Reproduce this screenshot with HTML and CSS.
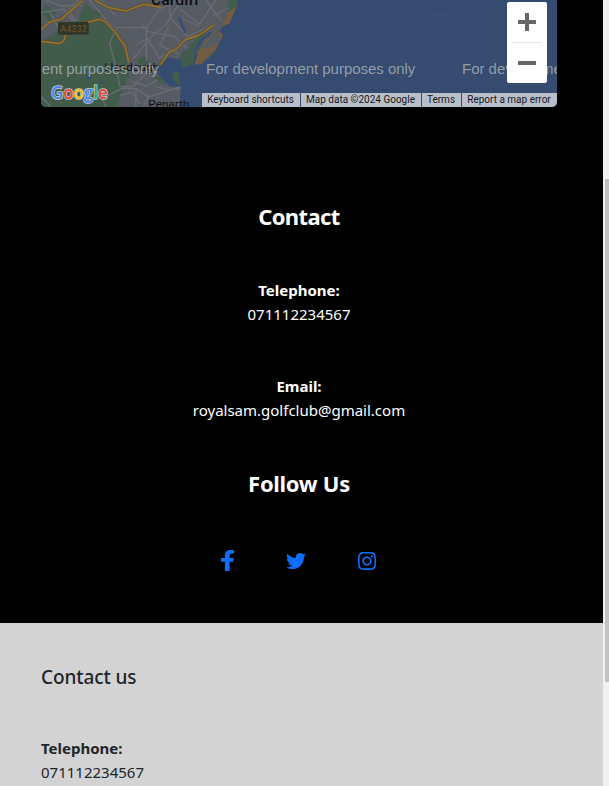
FILE: index.html
```html
<!DOCTYPE html>
<html lang="en">
<head>
<meta charset="utf-8">
<title>Royal Sam Golf Club</title>
<link rel="stylesheet" href="styles.css">
</head>
<body>
<div class="page">
<main class="content">
<section class="dark">
  <div class="map">
    <svg class="terrain" viewBox="15 0 1548 321" preserveAspectRatio="none" aria-hidden="true">
      <rect x="15" width="1548" height="321" fill="#364b70"/>
      <path fill="#575b63" d="M15 0H605L603 17 573 41 566 70 553 88 545 116 532 149 514 167 492 183 479 192 485 164 476 151 452 147 436 163 432 179 397 172 371 195 364 219 383 242 404 260 433 260 433 321H15Z"/>
      <path fill="#425c4c" d="M133 38 128 60 110 68 66 92 15 125V321H242L257 281 266 253 281 230 274 194 262 143 233 97 220 76 205 68 187 54 205 38 166 29 151 10ZM15 34 38 62 60 38 30 12Z"/>
      <path fill="#425c4c" d="M578 0H606L592 38 568 34ZM344 225 371 230 391 251 371 249ZM306 178 323 167 342 190 336 212 306 212ZM435 163 464 139 477 160 471 193 436 204Z"/>
      <path fill="#725d42" d="M490 143 539 91 562 103 540 150 497 192 476 194ZM558 80 574 39 604 16 581 70Z"/>
      <path fill="#575b63" d="M496 143 527 108 547 91 551 127 527 140 503 147Z"/>
      <path fill="#425c4c" d="M458 139 492 107 513 97 492 148 476 164ZM410 219 429 214 433 260 410 239Z"/>
      <g fill="none" stroke="#696c73" stroke-width="4">
        <path d="M16 37 83 28 109 60 128 59M29 0 76 18 137 15M160 0 230 82 333 83 368 30 430 0M240 87 221 130 240 205 252 260 290 259 329 223M290 179 354 101 392 71 436 0M299 135 334 115 370 174 397 160M315 70 335 94 413 109 452 145M331 80 331 184M399 76 372 137 428 160M397 0 404 54 455 110 535 73M438 54 490 80M431 27 490 72 540 0M510 0 556 62M530 46 580 24"/>
        <path d="M257 264 300 266 338 290 433 261M289 244 331 258 365 240M300 265 299 321M257 265 198 297 211 321M250 287 288 276 310 311M338 290 321 321M360 260 390 268 433 267M16 290 45 321M129 0 101 28 125 89M41 36 69 86M194 0 240 48"/>
      </g>
      <g stroke="#324c7b" stroke-width="7"><path d="M429 53 448 99M492 124 525 97M471 157 493 126"/><path d="M150 232H166M191 248H200"/></g>
      <g fill="none" stroke-linejoin="round">
        <path stroke="#5d4d2b" stroke-width="9" d="M15 90 38 68 76 57 139 2M176 0 219 23 270 33 324 13 376 22M15 124 43 127 70 131 84 121 91 100 147 69 189 58 208 65 234 93 267 137 278 187M372 195 401 155 421 147 448 119 488 106 532 76"/>
        <path stroke="#93732f" stroke-width="5" d="M15 90 38 68 76 57 139 2M176 0 219 23 270 33 324 13 376 22M15 124 43 127 70 131 84 121 91 100 147 69 189 58 208 65 234 93 267 137 278 187M372 195 401 155 421 147 448 119 488 106 532 76"/>
      </g>
      <path d="M1134 48 1222 46 1292 42 1404 37" stroke="#46566d" stroke-width="2" stroke-dasharray="16 7" fill="none"/>
      <rect x="66" y="66" width="92" height="38" rx="5" fill="#30352c"/>
      <g class="places">
        <text x="73" y="95" class="road-number" textLength="80">A4232</text>
        <text x="345" y="16" class="city" textLength="145" lengthAdjust="spacingAndGlyphs">Cardiff</text>
        <text x="205" y="213" textLength="164" lengthAdjust="spacingAndGlyphs">Llandough</text>
        <text x="337" y="325" textLength="123" lengthAdjust="spacingAndGlyphs">Penarth</text>
      </g>
      <g class="watermark">
        <text x="17" y="223" textLength="351">ent purposes only</text>
        <text x="510" y="223" textLength="628">For development purposes only</text>
        <text x="1278" y="223" textLength="628">For development purposes only</text>
      </g>
      <text class="google" x="45" y="297" textLength="170" lengthAdjust="spacingAndGlyphs"><tspan fill="#4285f4">G</tspan><tspan fill="#ea4335">o</tspan><tspan fill="#fbbc04">o</tspan><tspan fill="#4285f4">g</tspan><tspan fill="#34a853">l</tspan><tspan fill="#ea4335">e</tspan></text>
    </svg>
    <div class="zoom"><span class="plus"></span><span class="rule"></span><span class="minus"></span></div>
    <div class="credits"><span class="keys">Keyboard shortcuts</span><span class="data">Map data ©2024 Google</span><span class="terms">Terms</span><span class="report">Report a map error</span></div>
  </div>
  <h2>Contact</h2>
  <div class="detail"><strong>Telephone:</strong><span class="digits">071112234567</span></div>
  <div class="detail"><strong>Email:</strong><span>royalsam.golfclub@gmail.com</span></div>
  <h2 class="follow">Follow Us</h2>
  <nav class="social">
    <a aria-label="Facebook"><svg width="13" height="21" viewBox="22 0 275 512" preserveAspectRatio="none"><path d="M279.14 288l14.22-92.66h-88.91v-60.13c0-25.35 12.42-50.06 52.24-50.06h40.42V6.26S260.43 0 225.36 0c-73.22 0-121.08 44.38-121.08 124.72v70.62H22.89V288h81.39v224h100.17V288z"/></svg></a>
    <a aria-label="Twitter"><svg width="20" height="20" viewBox="0 0 512 512"><path d="M459.37 151.716c.325 4.548.325 9.097.325 13.645 0 138.72-105.583 298.558-298.558 298.558-59.452 0-114.68-17.219-161.137-47.106 8.447.974 16.568 1.299 25.34 1.299 49.055 0 94.213-16.568 130.274-44.832-46.132-.975-84.792-31.188-98.112-72.772 6.498.974 12.995 1.624 19.818 1.624 9.421 0 18.843-1.3 27.614-3.573-48.081-9.747-84.143-51.98-84.143-102.985v-1.299c13.969 7.797 30.214 12.67 47.431 13.319-28.264-18.843-46.781-51.005-46.781-87.391 0-19.492 5.197-37.36 14.294-52.954 51.655 63.675 129.3 105.258 216.365 109.807-1.624-7.797-2.599-15.918-2.599-24.04 0-57.828 46.782-104.934 104.934-104.934 30.213 0 57.502 12.67 76.67 33.137 23.715-4.548 46.456-13.32 66.599-25.34-7.798 24.366-24.366 44.833-46.132 57.827 21.117-2.273 41.584-8.122 60.426-16.243-14.292 20.791-32.161 39.308-52.628 54.253z"/></svg></a>
    <a aria-label="Instagram"><svg width="18" height="18" viewBox="0 31.5 448 449"><path d="M224.1 141c-63.6 0-114.9 51.3-114.9 114.9s51.3 114.9 114.9 114.9S339 319.5 339 255.9 287.7 141 224.1 141zm0 189.6c-41.1 0-74.7-33.5-74.7-74.7s33.5-74.7 74.7-74.7 74.7 33.5 74.7 74.7-33.6 74.7-74.7 74.7zm146.4-194.3c0 14.9-12 26.8-26.8 26.8-14.9 0-26.8-12-26.8-26.8s12-26.8 26.8-26.8 26.8 12 26.8 26.8zm76.1 27.2c-1.7-35.9-9.9-67.7-36.2-93.9-26.2-26.2-58-34.4-93.9-36.2-37-2.1-147.9-2.1-184.9 0-35.8 1.7-67.6 9.9-93.9 36.1s-34.4 58-36.2 93.9c-2.1 37-2.1 147.9 0 184.9 1.7 35.9 9.9 67.7 36.2 93.9s58 34.4 93.9 36.2c37 2.1 147.9 2.1 184.9 0 35.9-1.7 67.7-9.9 93.9-36.2 26.2-26.2 34.4-58 36.2-93.9 2.1-37 2.1-147.8 0-184.8zM398.8 388c-7.8 19.6-22.9 34.7-42.6 42.6-29.5 11.7-99.5 9-132.1 9s-102.7 2.6-132.1-9c-19.6-7.8-34.7-22.9-42.6-42.6-11.7-29.5-9-99.5-9-132.1s-2.6-102.7 9-132.1c7.8-19.6 22.9-34.7 42.6-42.6 29.5-11.7 99.5-9 132.1-9s102.7-2.6 132.1 9c19.6 7.8 34.7 22.9 42.6 42.6 11.7 29.5 9 99.5 9 132.1s2.7 102.7-9 132.1z"/></svg></a>
  </nav>
</section>
<footer>
  <h3>Contact us</h3>
  <div class="detail"><strong>Telephone:</strong><span class="digits">071112234567</span></div>
</footer>
</main>
<div class="scrollbar"><div class="thumb"></div></div>
</div>
</body>
</html>
```

FILE: styles.css
```css
* { box-sizing: border-box; }
body {
  margin: 0;
  overflow: hidden;
  font: 15px/24px "Noto Sans", "Open Sans", sans-serif;
}
.page { display: flex; height: 786px; background: #f1f1f1; }
.content { width: 603px; height: 786px; overflow: hidden; }
.dark {
  height: 623px;
  padding: 0 46px 0 41px;
  background: #000;
  color: #fff;
  text-align: center;
}
.map {
  position: relative;
  height: 107px;
  border-radius: 0 0 5px 5px;
  overflow: hidden;
}
.terrain { display: block; width: 516px; height: 107px; }
.places { font: 34px Roboto, sans-serif; fill: #0c0e10; stroke: #61656b; stroke-width: 1px; paint-order: stroke; }
.places .city { font-size: 46px; font-weight: 500; }
.places .road-number { font-size: 26px; font-weight: 500; fill: #665322; stroke: none; }
.watermark { font: 45px "Liberation Sans", Arial, sans-serif; fill: #a7adb5; fill-opacity: .85; }
.google { font: 600 56px "Open Sans", sans-serif; stroke: #c4c8c9; stroke-width: 5px; stroke-linejoin: round; paint-order: stroke; }
.zoom {
  position: absolute;
  top: 2px;
  right: 10px;
  width: 40px;
  height: 81px;
  display: flex;
  flex-direction: column;
  align-items: center;
  border-radius: 2px;
  background: #fff;
}
.plus {
  width: 18px;
  height: 18px;
  margin-top: 11px;
  background: linear-gradient(#666, #666) center / 18px 4px no-repeat, linear-gradient(#666, #666) center / 4px 18px no-repeat;
}
.rule { width: 30px; height: 1px; margin-top: 11px; background: #e6e6e6; }
.minus { width: 18px; height: 4px; margin-top: 18px; background: #666; }
.credits {
  position: absolute;
  right: 0;
  bottom: 0;
  display: flex;
  gap: 1px;
  height: 14px;
  font: 10px/14px Roboto, sans-serif;
  color: #16181b;
  white-space: nowrap;
}
.credits span { padding-right: 1px; background: #b9bfca; }
.keys { width: 98px; }
.data { width: 120px; }
.terms { width: 39px; }
.report { width: 95px; }
h2 {
  margin: 92px 0 0;
  font-size: 22px;
  line-height: 34px;
  font-weight: 700;
  letter-spacing: -.6px;
}
h2 + .detail { margin-top: 45px; }
.detail { display: flex; flex-direction: column; }
.detail + .detail { margin-top: 48px; }
.detail strong { font-weight: 700; }
h2.follow { margin-top: 44px; letter-spacing: -.3px; }
.social {
  display: flex;
  align-items: center;
  justify-content: center;
  gap: 52px;
  height: 23px;
  margin-top: 49px;
  padding-right: 1px;
}
.social svg { display: block; fill: #0d6efd; }
footer {
  height: 163px;
  padding: 42px 41px 0;
  background: #d3d3d3;
  color: #212529;
}
h3 { margin: 0; font-size: 19px; line-height: 24px; font-weight: 500; letter-spacing: -.1px; }
footer .detail { margin-top: 47px; }
.scrollbar { width: 6px; padding: 179px 0 0 2px; background: #f1f1f1; }
.thumb { height: 503px; background: #c1c1c1; }
```
